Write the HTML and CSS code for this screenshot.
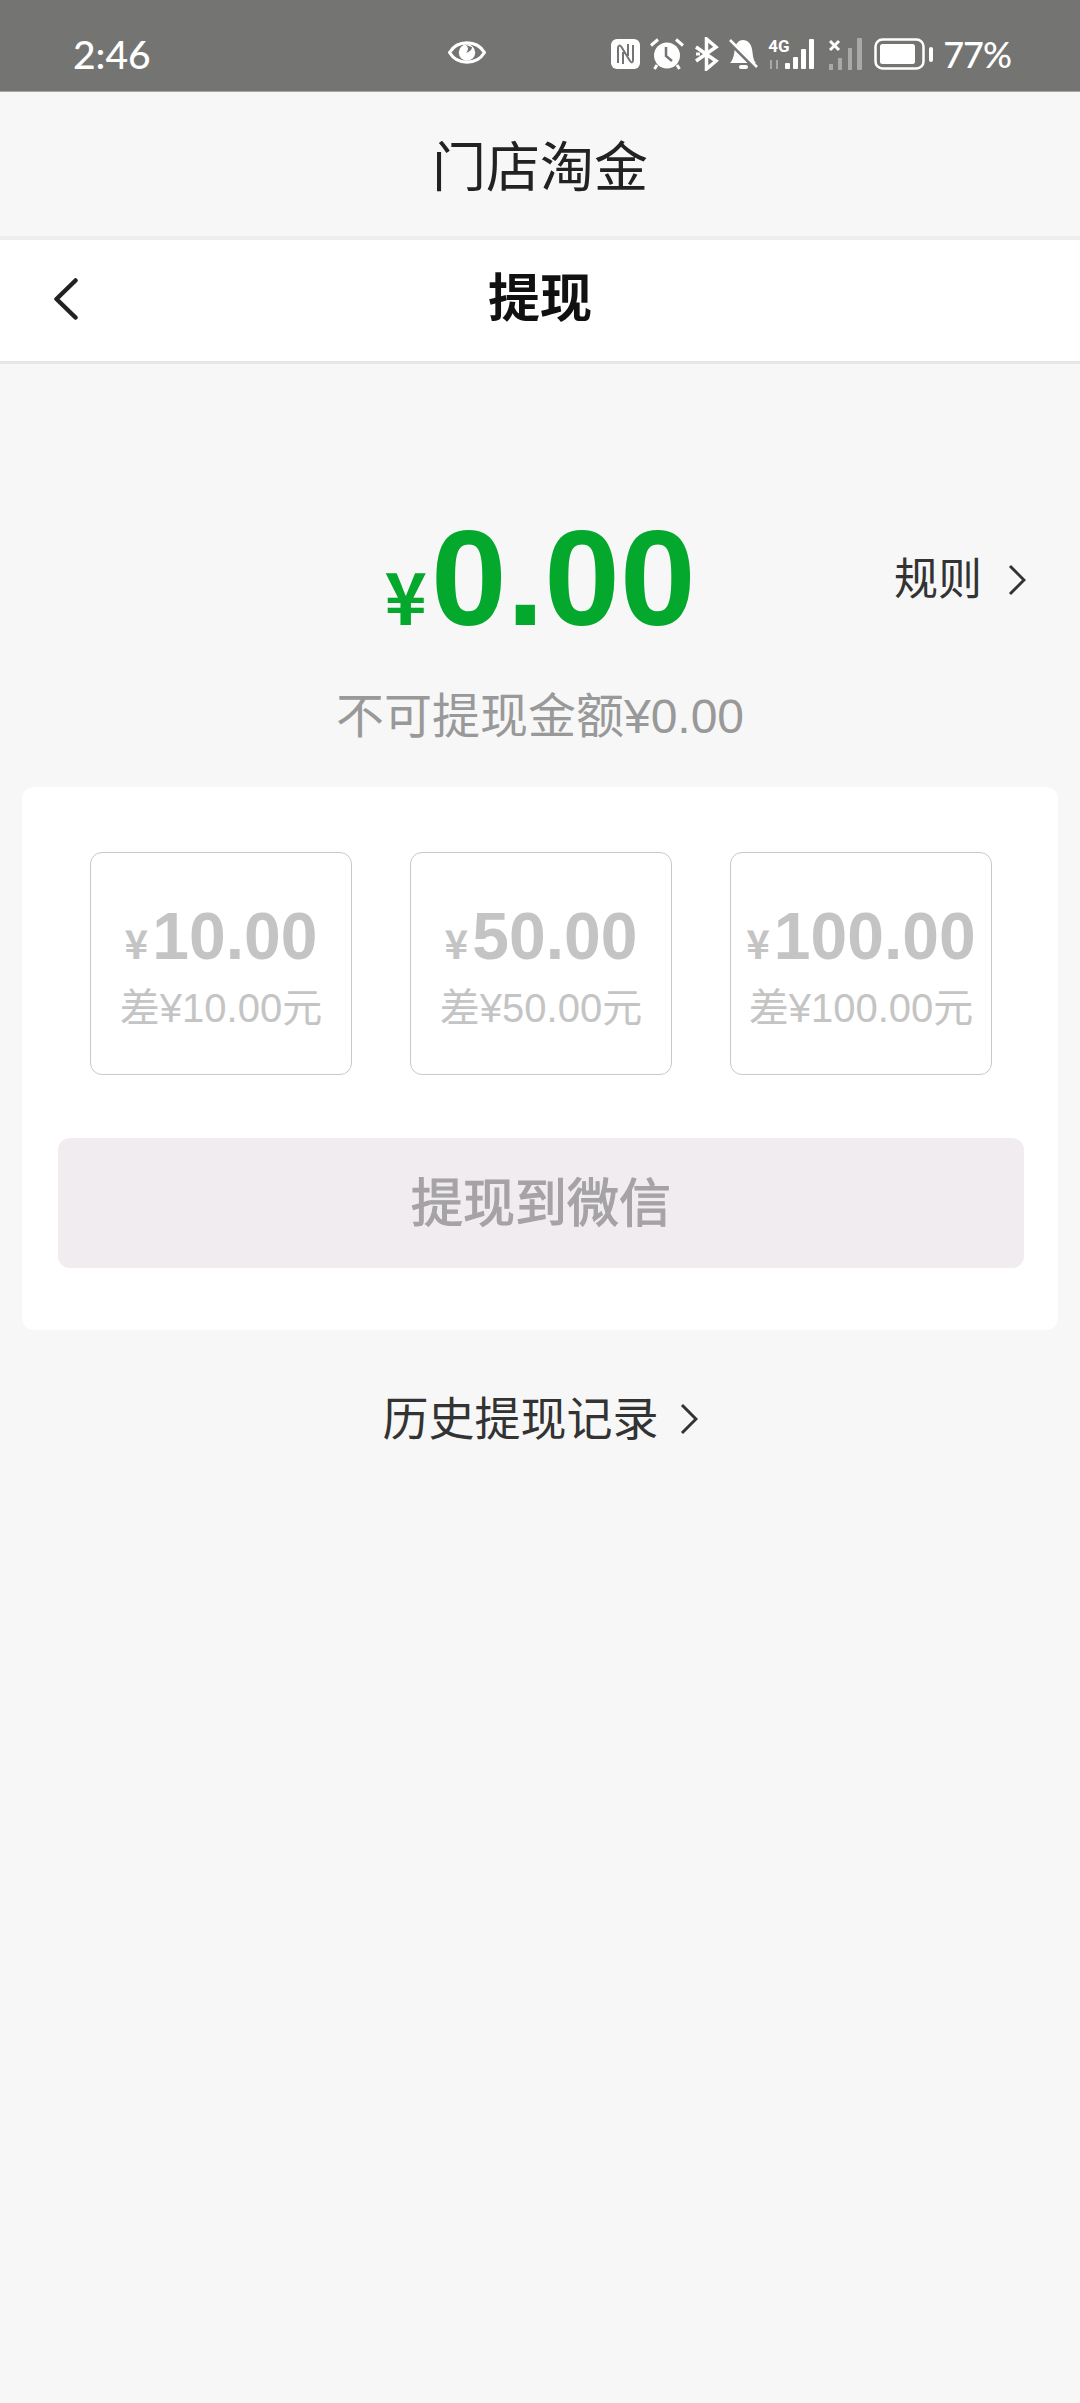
FILE: index.html
```html
<!DOCTYPE html>
<html>
<head>
    <meta charset="UTF-8">
    <meta name="viewport" content="width=device-width, initial-scale=1.0">
    <title>提现</title>
    <link rel="stylesheet" href="styles.css">
</head>
<body>
    <div class="status-bar">
        <span class="status-time">2:46</span>
        <svg class="icon-eye" width="38" height="27" viewBox="0 0 37 26">
            <path d="M1.5 13C9 .5 28 .5 35.5 13C28 25.500 9 25.500 1.500 13Z" fill="none" stroke="#fff" stroke-width="3"/>
            <circle cx="18.500" cy="13" r="8" fill="#fff"/>
            <path d="M17 5.500C20 8 20.500 10 17.500 13.500C21 12.500 23 11 23.500 8Z" fill="#747572"/>
        </svg>
        <div class="status-icons">
            <svg width="29" height="30" viewBox="0 0 29 30">
                <rect width="29" height="30" rx="6" fill="#fff"/>
                <path d="M7 24V9C7 6 9 6 10.500 8L19 22C20.500 24 22 24 22 21V6M12 13V25M17 5V17" fill="none" stroke="#747572" stroke-width="2"/>
            </svg>
            <svg class="gap-alarm" width="34" height="32" viewBox="0 0 34 32">
                <circle cx="17" cy="17.500" r="13" fill="#fff"/>
                <path d="M1 7.500L8 1.500M33 7.500L26 1.500M7 27L4.500 31M27 27L29.500 31" stroke="#fff" stroke-width="3"/>
                <path d="M16 9V18L22 23" fill="none" stroke="#747572" stroke-width="2.500"/>
            </svg>
            <svg class="gap-bt" width="25" height="34" viewBox="0 0 25 34">
                <path d="M2 10L22 24L12.500 32V2L22 10L2 24" fill="none" stroke="#fff" stroke-width="3.500"/>
                <path d="M2 17H6" stroke="#fff" stroke-width="3"/>
            </svg>
            <svg class="gap-bell" width="30" height="32" viewBox="0 0 30 32">
                <path d="M2 25C6 21 6 15 7 10C8 5 11 2 15 2C20 2 23 6 24 11C25 17 25 22 28 25Z" fill="#fff"/>
                <rect x="11" y="27" width="9" height="4" rx="2" fill="#fff"/>
                <path d="M1 3L29 31" stroke="#747572" stroke-width="5"/>
                <path d="M2 2L29 29" stroke="#fff" stroke-width="2.500"/>
            </svg>
            <div class="signal">
                <span class="net-label">4G</span>
                <svg width="50" height="30" viewBox="0 0 50 30">
                    <path d="M3 30V21M9 30V21" stroke="#a9aaa8" stroke-width="2"/>
                    <rect x="17" y="24" width="5" height="6" rx="1" fill="#fff"/>
                    <rect x="25" y="18" width="5" height="12" rx="1" fill="#fff"/>
                    <rect x="33" y="10" width="5" height="20" rx="1" fill="#fff"/>
                    <rect x="41" y="0" width="5" height="30" rx="1" fill="#fff"/>
                </svg>
            </div>
            <svg class="gap-sim" width="33" height="32" viewBox="0 0 33 32">
                <path d="M1 3L10 12M10 3L1 12" stroke="#fff" stroke-width="3"/>
                <rect x="0" y="26" width="4" height="6" fill="#a9aaa8"/>
                <rect x="9" y="20" width="4" height="12" fill="#a9aaa8"/>
                <rect x="19" y="10" width="4" height="22" fill="#a9aaa8"/>
                <rect x="28" y="0" width="5" height="32" rx="1" fill="#a9aaa8"/>
            </svg>
            <svg class="gap-battery" width="59" height="32" viewBox="0 0 59 32">
                <rect x="1.500" y="1.500" width="48" height="29" rx="7" fill="none" stroke="#fff" stroke-width="2.500"/>
                <rect x="6" y="6" width="35" height="20" rx="2.500" fill="#fff"/>
                <rect x="55" y="9" width="4" height="15" rx="2" fill="#fff"/>
            </svg>
            <span class="status-pct">77%</span>
        </div>
    </div>

    <div class="app-title">门店淘金</div>

    <div class="nav-bar">
        <svg class="nav-back" width="26" height="42" viewBox="0 0 26 42">
            <path d="M22.500 2.500L3.500 21L22.500 39.500" fill="none" stroke="#222" stroke-width="4.500" stroke-linecap="round" stroke-linejoin="round"/>
        </svg>
        <span class="nav-title">提现</span>
    </div>

    <div class="amount-row">
        <div class="amount"><span class="yen">¥</span>0.00</div>
        <div class="rule">
            规则
            <svg width="18" height="32" viewBox="0 0 18 32"><path d="M2 2L16 16L2 30" fill="none" stroke="#333" stroke-width="3"/></svg>
        </div>
    </div>
    <div class="frozen">不可提现金额¥0.00</div>

    <div class="card">
        <div class="tiles">
            <div class="tile">
                <div class="tile-value"><span class="tile-yen">¥</span>10.00</div>
                <div class="tile-note">差¥10.00元</div>
            </div>
            <div class="tile">
                <div class="tile-value"><span class="tile-yen">¥</span>50.00</div>
                <div class="tile-note">差¥50.00元</div>
            </div>
            <div class="tile">
                <div class="tile-value"><span class="tile-yen">¥</span>100.00</div>
                <div class="tile-note">差¥100.00元</div>
            </div>
        </div>
        <div class="withdraw-btn">提现到微信</div>
    </div>

    <div class="history">
        历史提现记录
        <svg width="18" height="32" viewBox="0 0 18 32"><path d="M2 2L16 16L2 30" fill="none" stroke="#333" stroke-width="3"/></svg>
    </div>
</body>
</html>
```

FILE: styles.css
```css
* {
    box-sizing: border-box;
}
body {
    margin: 0;
    height: 2403px;
    overflow: hidden;
    background: #f7f7f7;
    font-family: "Liberation Sans", "Noto Sans CJK SC", sans-serif;
    color: #333;
}
.status-bar {
    height: 92px;
    background: #747572;
    color: #fff;
    display: flex;
    align-items: center;
    padding: 16px 69px 0 73px;
    border-bottom: 1px solid #a5a6a3;
}
.status-time {
    font-family: Lato, sans-serif;
    font-size: 39px;
    font-weight: 500;
    width: 375px;
}
.icon-eye {
    margin-top: -2px;
}
.status-icons {
    display: flex;
    align-items: center;
    margin-left: auto;
}
.gap-alarm {
    margin-left: 10px;
}
.gap-bt {
    margin-left: 10px;
}
.gap-bell {
    margin-left: 9px;
}
.signal {
    position: relative;
    margin-left: 10px;
    width: 50px;
    height: 30px;
}
.net-label {
    position: absolute;
    left: 0;
    top: -2px;
    font-family: Roboto, sans-serif;
    font-size: 17px;
    font-weight: 700;
    line-height: 18px;
}
.gap-sim {
    margin-left: 11px;
}
.gap-battery {
    margin-left: 12px;
}
.status-pct {
    margin-left: 10px;
    font-family: Lato, sans-serif;
    font-size: 36px;
    font-weight: 500;
    letter-spacing: -1px;
}
.app-title {
    height: 148px;
    padding-bottom: 2px;
    display: flex;
    align-items: center;
    justify-content: center;
    font-size: 54px;
    color: #222;
    background: #f7f7f7;
    border-bottom: 4px solid #eeeeee;
}
.nav-bar {
    height: 124px;
    padding-bottom: 12px;
    background: #fff;
    border-bottom: 3px solid #e6e6e6;
    display: flex;
    align-items: center;
    justify-content: center;
    position: relative;
}
.nav-back {
    position: absolute;
    left: 53px;
    top: 38px;
}
.nav-title {
    font-size: 52px;
    font-weight: 700;
    color: #111;
}
.amount-row {
    margin-top: 134px;
    height: 160px;
    display: grid;
    grid-template-columns: 1fr auto 1fr;
    align-items: center;
}
.amount {
    grid-column: 2;
    color: #04a82d;
    font-size: 136px;
    font-weight: 700;
    line-height: 160px;
    white-space: nowrap;
}
.yen {
    font-family: "Noto Sans CJK SC", sans-serif;
    font-size: 72px;
    margin-right: 4px;
}
.rule {
    grid-column: 3;
    justify-self: end;
    display: flex;
    align-items: center;
    gap: 26px;
    padding-right: 54px;
    padding-bottom: 12px;
    font-size: 44px;
    line-height: 60px;
}
.frozen {
    margin-top: 29px;
    line-height: 60px;
    text-align: center;
    font-size: 48px;
    color: #999;
}
.card {
    margin: 40px 22px 0;
    height: 543px;
    padding: 65px 34px 0 36px;
    background: #fff;
    border-radius: 12px;
}
.tiles {
    display: flex;
    justify-content: space-between;
    margin: 0 32px;
}
.tile {
    width: 262px;
    height: 223px;
    border: 1px solid #c9c9c9;
    border-radius: 12px;
    display: flex;
    flex-direction: column;
    align-items: center;
    color: #c4c4c4;
}
.tile-value {
    margin-top: 45px;
    font-size: 66px;
    font-weight: 700;
    line-height: 76px;
    white-space: nowrap;
}
.tile-yen {
    font-family: "Noto Sans CJK SC", sans-serif;
    font-size: 40px;
    margin-right: 4px;
}
.tile-note {
    margin-top: 3px;
    font-size: 40px;
    line-height: 50px;
    white-space: nowrap;
}
.withdraw-btn {
    margin-top: 63px;
    height: 130px;
    padding-bottom: 8px;
    background: #f0ecf0;
    border-radius: 12px;
    display: flex;
    align-items: center;
    justify-content: center;
    font-size: 52px;
    -webkit-text-stroke: 1.2px #a5a3a5;
    color: #a5a3a5;
}
.history {
    margin-top: 59px;
    line-height: 60px;
    display: flex;
    justify-content: center;
    align-items: center;
    gap: 21px;
    font-size: 46px;
}
```
